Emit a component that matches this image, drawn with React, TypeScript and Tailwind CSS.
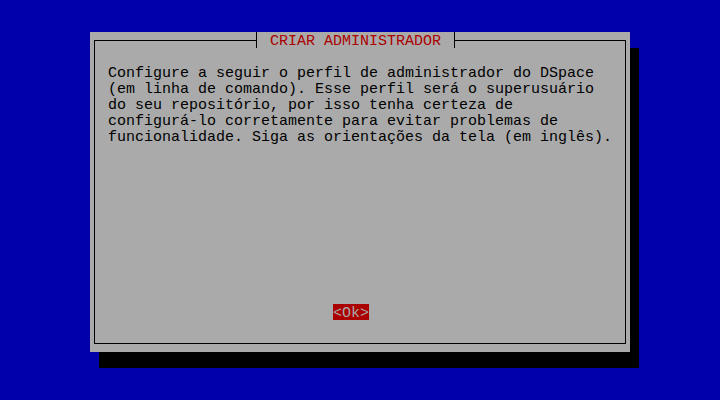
import React from "react";

const lines = [
  "Configure a seguir o perfil de administrador do DSpace",
  "(em linha de comando). Esse perfil será o superusuário",
  "do seu repositório, por isso tenha certeza de",
  "configurá-lo corretamente para evitar problemas de",
  "funcionalidade. Siga as orientações da tela (em inglês).",
];

const App: React.FC = () => {
  return (
    <div
      className="w-[720px] h-[400px] bg-[#0000aa] pt-[32px] pl-[90px] overflow-hidden text-[15px] whitespace-pre"
      style={{ fontFamily: '"Liberation Mono", "DejaVu Sans Mono", monospace' }}
    >
      {/* dialog box with its one-cell shadow */}
      <div className="w-[540px] h-[320px] bg-[#aaaaaa] px-[4px] py-[8px] shadow-[9px_16px_0_0_#000000]">
        <div className="relative h-full border border-black flex flex-col">
          {/* title ┤ CRIAR ADMINISTRADOR ├ sits over the frame line */}
          <div className="absolute top-[-9px] left-[161px] w-[199px] h-[16px] bg-[#aaaaaa] border-x border-black pt-[3px] pl-[13px] leading-[13px] text-[#aa0000]">
            CRIAR ADMINISTRADOR
          </div>

          {/* message text */}
          <div className="pl-[13px] pt-[25px] leading-[16px] text-black">
            {lines.map((l) => (
              <div key={l}>{l}</div>
            ))}
          </div>

          {/* button */}
          <div className="mt-auto pb-[23px] pl-[238px] flex">
            <div className="h-[16px] w-[36px] bg-[#aa0000] text-[#aaaaaa] pt-[3px] leading-[13px]">
              {"<Ok>"}
            </div>
          </div>
        </div>
      </div>
    </div>
  );
};

export default App;
